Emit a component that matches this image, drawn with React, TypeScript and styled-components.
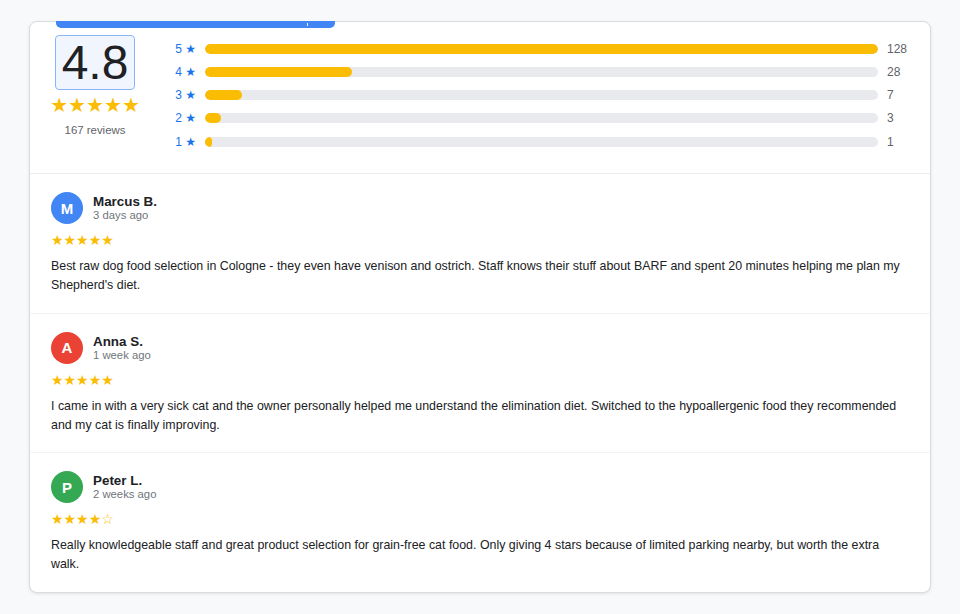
import React from "react";
import styled, { createGlobalStyle } from "styled-components";

const GlobalStyle = createGlobalStyle`
  html, body { margin: 0; padding: 0; }
  body {
    background: #f8f9fa;
    font-family: "Liberation Sans", Arial, sans-serif;
    color: #202124;
  }
`;

const Page = styled.div`
  padding: 21px 29px 22px 29px;
`;

const Card = styled.div`
  position: relative;
  background: #fff;
  border: 1px solid #dadce0;
  border-radius: 8px;
  box-shadow: 0 1px 3px rgba(60, 64, 67, 0.12);
`;

const TopTab = styled.div`
  position: absolute;
  top: -1px;
  left: 26px;
  width: 279px;
  height: 7px;
  background: #4285f4;
  border-radius: 0 0 5px 5px;
  &::after {
    content: "";
    position: absolute;
    left: 251px;
    top: 2px;
    width: 1px;
    height: 3px;
    background: #e8f0fe;
  }
`;

const Summary = styled.div`
  display: flex;
  align-items: flex-start;
  gap: 37px;
  padding: 13px 21px 20px 22px;
  border-bottom: 1px solid #ebedf0;
`;

const RatingCol = styled.div`
  width: 86px;
  display: flex;
  flex-direction: column;
  align-items: center;
`;

const ScoreBox = styled.div`
  width: 78px;
  height: 53px;
  border: 1px solid #8ab4f8;
  border-radius: 4px;
  background: #f1f6fe;
  display: flex;
  align-items: center;
  justify-content: center;
  font-size: 48px;
  line-height: 1;
  color: #202124;
`;

const BigStars = styled.div`
  margin-top: 5px;
  font-family: "DejaVu Sans", sans-serif;
  font-size: 20px;
  line-height: 20px;
  color: #fbbc04;
`;

const ReviewCount = styled.div`
  margin-top: 8px;
  font-size: 11.4px;
  line-height: 15px;
  color: #5f6368;
`;

const Bars = styled.div`
  flex: 1;
  padding-top: 2px;
  display: flex;
  flex-direction: column;
`;

const BarRow = styled.div`
  height: 23.25px;
  display: flex;
  align-items: center;
  gap: 9px;
`;

const BarLabel = styled.div`
  width: 21px;
  text-align: right;
  font-size: 12px;
  color: #1a73e8;
  white-space: nowrap;
  font-family: "Liberation Sans", "DejaVu Sans", sans-serif;
`;

const Track = styled.div`
  flex: 1;
  height: 10px;
  border-radius: 5px;
  background: #e8eaed;
  overflow: hidden;
`;

const Fill = styled.div`
  height: 100%;
  border-radius: 5px;
  background: #fbbc04;
`;

const BarCount = styled.div`
  width: 22px;
  font-size: 12px;
  color: #5f6368;
`;

const Review = styled.div<{ $last?: boolean }>`
  padding: 18px 21px 17.5px 21px;
  border-bottom: ${(p) => (p.$last ? "none" : "1px solid #f1f3f4")};
`;

const Header = styled.div`
  display: flex;
  align-items: center;
  gap: 10px;
`;

const Avatar = styled.div<{ $color: string }>`
  width: 32px;
  height: 32px;
  border-radius: 50%;
  background: ${(p) => p.$color};
  color: #fff;
  font-size: 15px;
  font-weight: 700;
  display: flex;
  align-items: center;
  justify-content: center;
`;

const Who = styled.div`
  display: flex;
  flex-direction: column;
`;

const Name = styled.div`
  padding-top: 1px;
  font-size: 13.4px;
  font-weight: 700;
  line-height: 14px;
  color: #202124;
`;

const When = styled.div`
  font-size: 11.3px;
  line-height: 13px;
  color: #70757a;
`;

const SmallStars = styled.div`
  margin-top: 8px;
  font-family: "DejaVu Sans", sans-serif;
  font-size: 14px;
  line-height: 16px;
  color: #fbbc04;
`;

const Body = styled.p`
  margin: 9px 0 0 0;
  font-size: 12.4px;
  line-height: 19px;
  color: #202124;
`;

const bars = [
  { star: 5, count: 128 },
  { star: 4, count: 28 },
  { star: 3, count: 7 },
  { star: 2, count: 3 },
  { star: 1, count: 1 },
];

const reviews = [
  {
    initial: "M",
    color: "#4285f4",
    name: "Marcus B.",
    when: "3 days ago",
    rating: 5,
    text: "Best raw dog food selection in Cologne - they even have venison and ostrich. Staff knows their stuff about BARF and spent 20 minutes helping me plan my Shepherd's diet.",
  },
  {
    initial: "A",
    color: "#ea4335",
    name: "Anna S.",
    when: "1 week ago",
    rating: 5,
    text: "I came in with a very sick cat and the owner personally helped me understand the elimination diet. Switched to the hypoallergenic food they recommended and my cat is finally improving.",
  },
  {
    initial: "P",
    color: "#34a853",
    name: "Peter L.",
    when: "2 weeks ago",
    rating: 4,
    text: "Really knowledgeable staff and great product selection for grain-free cat food. Only giving 4 stars because of limited parking nearby, but worth the extra walk.",
  },
];

const max = Math.max(...bars.map((b) => b.count));

export default function App() {
  return (
    <>
      <GlobalStyle />
      <Page>
        <Card>
          <TopTab />
          <Summary>
            <RatingCol>
              <ScoreBox>4.8</ScoreBox>
              <BigStars>★★★★★</BigStars>
              <ReviewCount>167 reviews</ReviewCount>
            </RatingCol>
            <Bars>
              {bars.map((b) => (
                <BarRow key={b.star}>
                  <BarLabel>{b.star} ★</BarLabel>
                  <Track>
                    <Fill style={{ width: `${Math.max((b.count / max) * 100, 1)}%` }} />
                  </Track>
                  <BarCount>{b.count}</BarCount>
                </BarRow>
              ))}
            </Bars>
          </Summary>
          {reviews.map((r, i) => (
            <Review key={r.name} $last={i === reviews.length - 1}>
              <Header>
                <Avatar $color={r.color}>{r.initial}</Avatar>
                <Who>
                  <Name>{r.name}</Name>
                  <When>{r.when}</When>
                </Who>
              </Header>
              <SmallStars>{"★".repeat(r.rating) + "☆".repeat(5 - r.rating)}</SmallStars>
              <Body>{r.text}</Body>
            </Review>
          ))}
        </Card>
      </Page>
    </>
  );
}
